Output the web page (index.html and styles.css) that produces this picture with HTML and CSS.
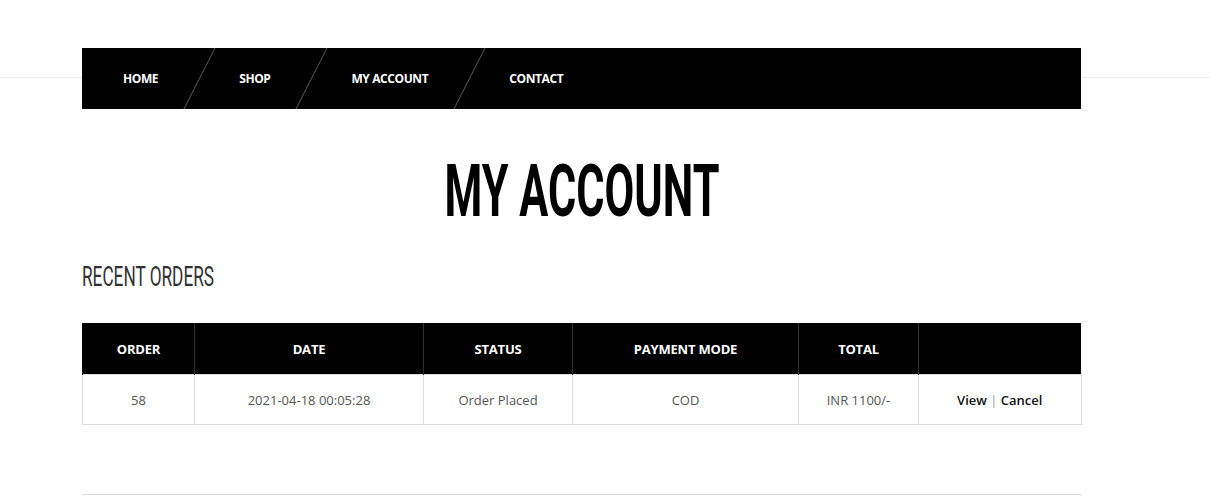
FILE: index.html
```html
<!DOCTYPE html>
<html>
<head>
<meta charset="utf-8">
<link rel="stylesheet" href="styles.css">
</head>
<body>
<header class="site-header">
  <nav class="main-nav">
    <a class="nav-item" href="#">HOME</a>
    <a class="nav-item" href="#">SHOP</a>
    <a class="nav-item" href="#">MY ACCOUNT</a>
    <a class="nav-item last" href="#">CONTACT</a>
  </nav>
</header>
<main class="container">
  <h1 class="page-title"><span>MY ACCOUNT</span></h1>
  <h2 class="section-title"><span>RECENT ORDERS</span></h2>
  <table class="orders">
    <thead>
      <tr>
        <th class="c1">ORDER</th>
        <th class="c2">DATE</th>
        <th class="c3">STATUS</th>
        <th class="c4">PAYMENT MODE</th>
        <th class="c5">TOTAL</th>
        <th class="c6"></th>
      </tr>
    </thead>
    <tbody>
      <tr>
        <td>58</td>
        <td>2021-04-18 00:05:28</td>
        <td>Order Placed</td>
        <td>COD</td>
        <td>INR 1100/-</td>
        <td class="actions"><a href="#">View</a> <span class="pipe">|</span> <a href="#">Cancel</a></td>
      </tr>
    </tbody>
  </table>
  <div class="footer-box"></div>
</main>
</body>
</html>
```
FILE: styles.css
```css
html, body {
  margin: 0;
  padding: 0;
  background: #fff;
}
body {
  font-family: "Open Sans", "Liberation Sans", sans-serif;
  color: #555;
}
.site-header {
  padding-top: 48px;
  background: linear-gradient(to bottom, transparent 77px, #ececec 77px, #ececec 78px, transparent 78px);
}
.main-nav {
  width: 999px;
  margin-left: 82px;
  height: 61px;
  background: #000;
  display: flex;
  align-items: center;
}
.nav-item {
  position: relative;
  height: 61px;
  line-height: 61px;
  padding: 0 40px 0 41px;
  color: #fff;
  font-weight: 700;
  font-size: 12px;
  text-decoration: none;
  letter-spacing: -0.4px;
}
.nav-item::after {
  content: "";
  position: absolute;
  right: -2px;
  top: 0;
  bottom: 0;
  width: 1px;
  background: #5a5a5a;
  transform: skewX(-27deg);
}
.nav-item.last::after {
  display: none;
}
.container {
  width: 999px;
  margin-left: 82px;
}
.page-title {
  margin: 47px 0 0;
  height: 72px;
  text-align: center;
  font-family: Roboto, "Liberation Sans", sans-serif;
  font-weight: 700;
  font-size: 72px;
  line-height: 72px;
  color: #000;
}
.page-title span {
  display: inline-block;
  transform: scaleX(0.6);
  transform-origin: center;
}
.section-title {
  margin: 35px 0 0;
  height: 28px;
  font-family: Roboto, "Liberation Sans", sans-serif;
  font-weight: 400;
  font-size: 28px;
  line-height: 28px;
  color: #333;
}
.section-title span {
  display: inline-block;
  transform: scaleX(0.615);
  transform-origin: left;
}
.orders {
  margin-top: 32px;
  width: 999px;
  border-collapse: collapse;
  table-layout: fixed;
}
.orders th {
  background: #000;
  color: #fff;
  font-size: 13px;
  font-weight: 700;
  height: 51px;
  padding: 0;
  border-left: 1px solid #2e2e2e;
  text-align: center;
  letter-spacing: -0.2px;
}
.orders th:first-child { border-left: 1px solid #000; }
.c1 { width: 111px; }
.c2 { width: 228px; }
.c3 { width: 148px; }
.c4 { width: 225px; }
.c5 { width: 119px; }
.c6 { width: 162px; }
.orders td {
  border: 1px solid #dcdcdc;
  height: 49px;
  padding: 0;
  text-align: center;
  font-size: 13px;
  color: #555;
}
.orders td.actions a {
  color: #111;
  font-weight: 600;
  text-decoration: none;
}
.orders td.actions .pipe {
  color: #999;
}
.footer-box {
  margin-top: 69px;
  height: 10px;
  border-top: 1px solid #dcdcdc;
  border-left: 1px solid #e6e6e6;
  border-right: 1px solid #e6e6e6;
}
```
